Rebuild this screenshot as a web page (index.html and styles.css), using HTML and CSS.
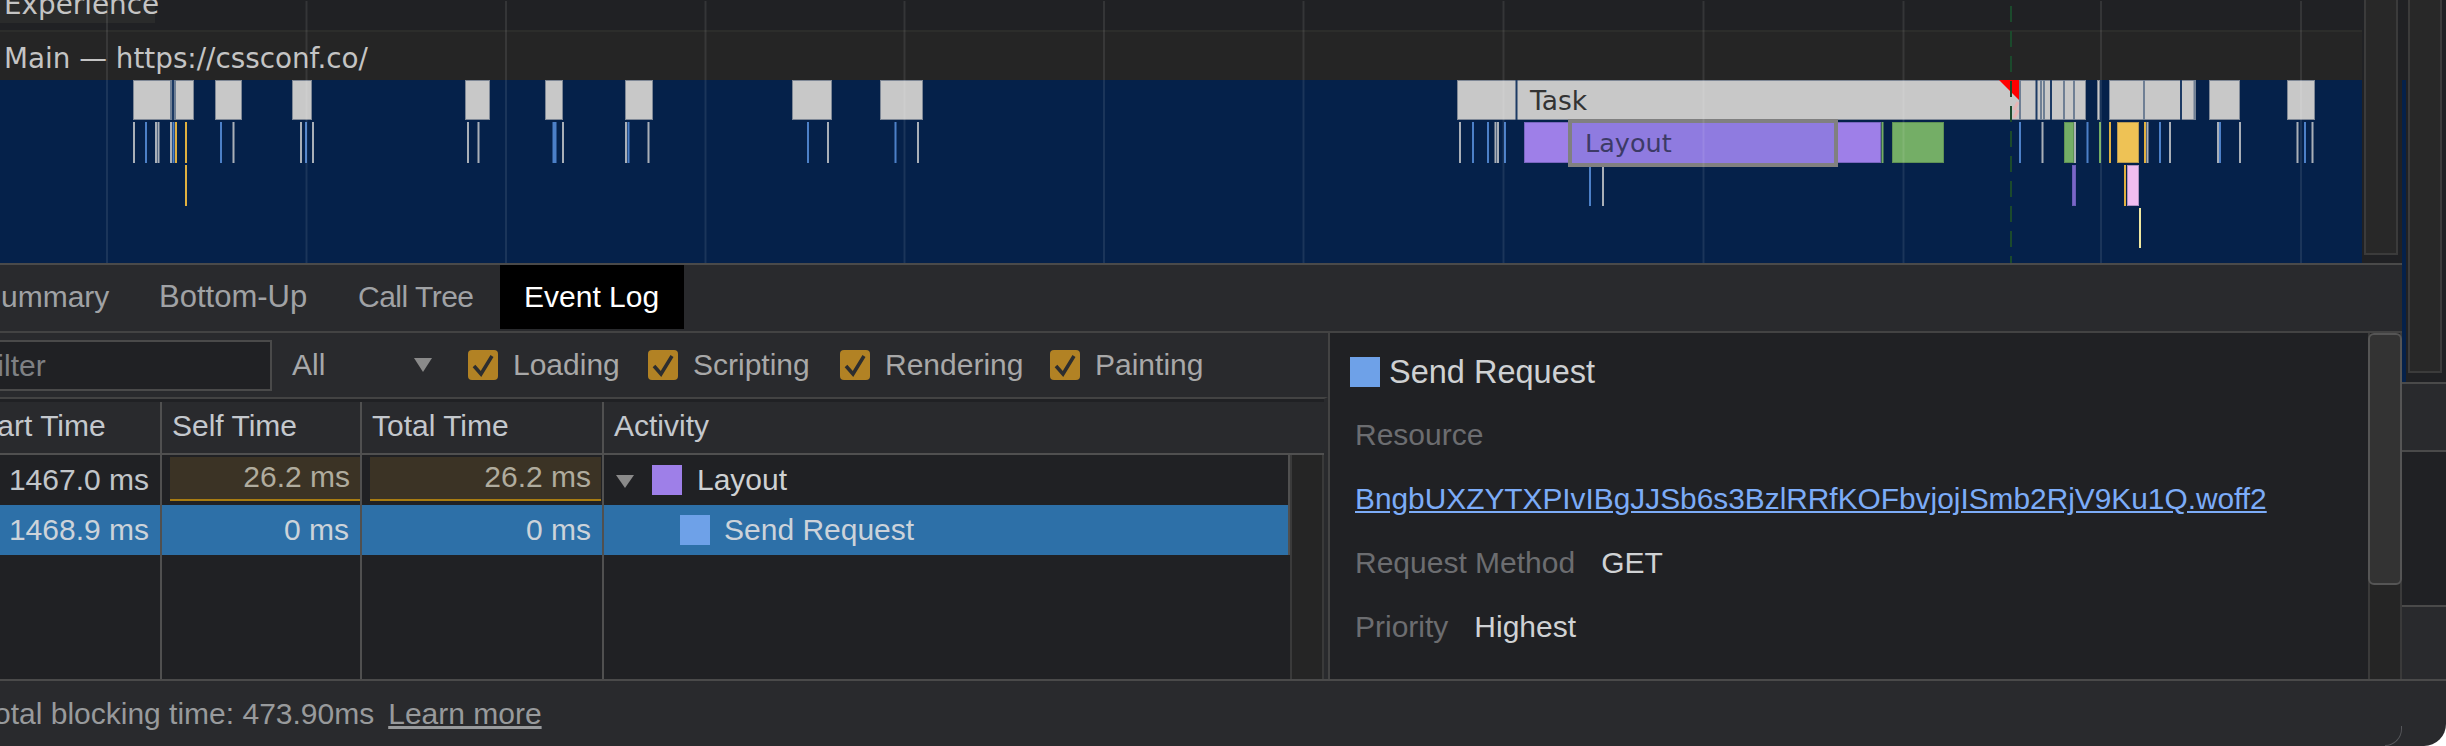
FILE: index.html
```html
<!DOCTYPE html>
<html lang="en">
<head>
<meta charset="utf-8">
<title>Performance</title>
<link rel="stylesheet" href="styles.css">
</head>
<body>
<div class="window">
  <div class="main">
    <div class="left">
      <div class="top">
        <svg class="flame" width="2362" height="263" viewBox="0 0 2362 263">
          <rect class="head-a" x="0" y="0" width="2362" height="30"/>
          <rect class="head-line" x="0" y="30" width="2362" height="2"/>
          <rect class="head-b" x="0" y="32" width="2362" height="48"/>
          <rect class="track" x="0" y="80" width="2362" height="183"/>
          <rect class="exp-bg" x="0" y="0" width="155" height="23"/>
          <text class="label" x="4" y="14">Experience</text>
          <text class="label" x="4" y="68">Main — https://cssconf.co/</text>

          <g class="bars">
            <rect x="133.5" y="80.5" width="60" height="39"/>
            <rect x="215.5" y="80.5" width="26" height="39"/>
            <rect x="292.5" y="80.5" width="19" height="39"/>
            <rect x="465.5" y="80.5" width="24" height="39"/>
            <rect x="545.5" y="80.5" width="17" height="39"/>
            <rect x="625.5" y="80.5" width="27" height="39"/>
            <rect x="792.5" y="80.5" width="39" height="39"/>
            <rect x="880.5" y="80.5" width="42" height="39"/>
            <rect x="1457.5" y="80.5" width="628" height="39"/>
            <rect x="2097.5" y="80.5" width="2" height="39"/>
            <rect x="2109.5" y="80.5" width="86" height="39"/>
            <rect x="2209.5" y="80.5" width="30" height="39"/>
            <rect x="2287.5" y="80.5" width="27" height="39"/>
          </g>
          <path class="cut-dark" d="M173 80v40M1516.500 80v40M2036.500 80v40M2051 80v40M2181 80v40"/>
          <path class="cut-mid" d="M171 80v40M175 80v40M2020 80v40M2041 80v40M2044 80v40M2064 80v40M2074 80v40M2144 80v40M2194.500 80v40"/>

          <path class="longtask" d="M1999 80H2019V100Z"/>
          <path class="hatch" d="M2018 102L2014 110M2018 110L2014 118"/>

          <path class="tick-gray" d="M134 122v41M156 122v41M158.500 122v41M171 122v41M233.500 122v41M301 122v41M313 122v41M468 122v41M478.500 122v41M563 122v41M626 122v41M648.500 122v41M828 122v41M918 122v41M1460 122v41M1495.500 122v41M1498 122v41M2042.500 122v41M2075 122v41M2147.500 122v41M2170 122v41M2218 122v41M2240 122v41M2297.500 122v41M2312.500 122v41M1603 165v41"/>
          <path class="tick-blue" d="M146 122v41M173.500 122v41M221 122v41M306 122v41M553.500 122v41M555.500 122v41M628.500 122v41M808 122v41M895.500 122v41M1473 122v41M1488 122v41M1505 122v41M2020 122v41M2087.500 122v41M2160 122v41M2220 122v41M2305 122v41M1590 165v41"/>
          <path class="tick-yellow" d="M176 122v41M186 122v41M2110 122v41M2145 122v41M186 165v41M2125 165v41"/>
          <path class="tick-green" d="M1882.500 122v41M2100 122v41"/>
          <path class="tick-pale" d="M2140 208v40"/>

          <rect class="bar-purple" x="1524.500" y="122.500" width="356" height="40"/>
          <rect class="bar-green" x="1892.500" y="122.500" width="51" height="40"/>
          <rect class="bar-green" x="2064.500" y="122.500" width="9" height="40"/>
          <rect class="bar-yellow" x="2117.500" y="122.500" width="21" height="40"/>
          <rect class="bar-violet" x="2072.500" y="165.500" width="3" height="40"/>
          <rect class="bar-pink" x="2127.500" y="165.500" width="11" height="40"/>
          <rect class="bar-selected" x="1570" y="121" width="266" height="44"/>

          <text class="task" x="1530" y="110">Task</text>
          <text class="layout" x="1585" y="152">Layout</text>

          <path class="dash" d="M2011 6V263"/>
          <path class="grid" d="M107 1V263M306.500 1V263M506 1V263M705.500 1V263M904.500 1V263M1104 1V263M1303.500 1V263M1503.500 1V263M1703.500 1V263M1903.500 1V263M2101 1V263M2301 1V263"/>
        </svg>
        <div class="overview"><div class="overview-box"></div></div>
      </div>

      <div class="lower">
        <div class="tabs">
          <div class="tab tab-summary">Summary</div>
          <div class="tab tab-wide">Bottom-Up</div>
          <div class="tab tab-tree">Call Tree</div>
          <div class="tab tab-active">Event Log</div>
        </div>
        <div class="split">
          <div class="log">
            <div class="toolbar">
              <div class="filter">Filter</div>
              <div class="select">
                <span>All</span>
                <svg class="select-arrow" width="18" height="14" viewBox="0 0 18 14"><path d="M0 0H18L9 14Z"/></svg>
              </div>
              <label class="check check-loading">
                <span class="box"><svg width="30" height="30" viewBox="0 0 30 30"><path d="M6 16L13 24L24 6"/></svg></span>Loading
              </label>
              <label class="check check-scripting">
                <span class="box"><svg width="30" height="30" viewBox="0 0 30 30"><path d="M6 16L13 24L24 6"/></svg></span>Scripting
              </label>
              <label class="check check-rendering">
                <span class="box"><svg width="30" height="30" viewBox="0 0 30 30"><path d="M6 16L13 24L24 6"/></svg></span>Rendering
              </label>
              <label class="check">
                <span class="box"><svg width="30" height="30" viewBox="0 0 30 30"><path d="M6 16L13 24L24 6"/></svg></span>Painting
              </label>
            </div>
            <div class="table">
              <div class="grid-row head">
                <div class="cell">Start Time</div>
                <div class="cell">Self Time</div>
                <div class="cell">Total Time</div>
                <div class="cell cell-last">Activity</div>
              </div>
              <div class="body">
                <div class="rows">
                  <div class="grid-row row">
                    <div class="cell num">1467.0 ms</div>
                    <div class="cell num warn warn-self"><span>26.2 ms</span></div>
                    <div class="cell num warn warn-total"><span>26.2 ms</span></div>
                    <div class="cell activity">
                      <svg class="twist" width="18" height="13" viewBox="0 0 18 13"><path d="M0 0H18L9 13Z"/></svg>
                      <span class="swatch swatch-purple"></span>Layout
                    </div>
                  </div>
                  <div class="grid-row row selected">
                    <div class="cell num">1468.9 ms</div>
                    <div class="cell num">0 ms</div>
                    <div class="cell num">0 ms</div>
                    <div class="cell activity activity-child">
                      <span class="swatch swatch-blue"></span><span class="child-name">Send Request</span>
                    </div>
                  </div>
                  <div class="grid-row filler">
                    <div class="cell"></div><div class="cell"></div><div class="cell"></div><div class="cell cell-last"></div>
                  </div>
                </div>
                <div class="log-scroll"></div>
              </div>
            </div>
          </div>
          <div class="details">
            <div class="details-body">
              <div class="d-row d-title"><span class="swatch swatch-blue d-swatch"></span><span class="d-title-text">Send Request</span></div>
              <div class="d-row d-label">Resource</div>
              <div class="d-row"><a class="d-link" href="#">BngbUXZYTXPIvIBgJJSb6s3BzlRRfKOFbvjojISmb2RjV9Ku1Q.woff2</a></div>
              <div class="d-row"><span class="d-label d-key">Request Method</span><span class="d-value">GET</span></div>
              <div class="d-row"><span class="d-label d-key">Priority</span><span class="d-value">Highest</span></div>
            </div>
            <div class="d-scroll"><div class="d-thumb"></div></div>
          </div>
        </div>
      </div>
    </div>

    <div class="side">
      <div class="side-top">
        <div class="strip"></div>
        <div class="side-box"></div>
      </div>
      <div class="side-a"></div>
      <div class="side-b"></div>
      <div class="side-c"></div>
    </div>
  </div>
  <div class="footer">
    <span class="footer-text">Total blocking time: 473.90ms</span>
    <a class="footer-link" href="#">Learn more</a>
  </div>
</div>
</body>
</html>
```
FILE: styles.css
```css
* { box-sizing: border-box; }
html, body { margin: 0; padding: 0; background: #fff; overflow: hidden; }
body { width: 2446px; height: 746px; font-family: "Liberation Sans", Arial, sans-serif; font-size: 30px; }

.window {
  width: 2446px; height: 746px; display: flex; flex-direction: column;
  background: #292a2d; border-bottom-right-radius: 22px; overflow: hidden; position: relative;
}
.main { display: flex; height: 679px; }
.left { width: 2402px; display: flex; flex-direction: column; }
.top { display: flex; height: 263px; }
.flame { display: block; flex: none; }

.head-a { fill: #202124; }
.head-line { fill: #2c2d2b; }
.head-b { fill: #252525; }
.track { fill: #05214a; }
.exp-bg { fill: #2a2b2b; }
.label { font-family: "DejaVu Sans", sans-serif; font-size: 27.800px; fill: #c4c4c4; }
.task { font-family: "DejaVu Sans", sans-serif; font-size: 26.500px; fill: #333; }
.layout { font-family: "DejaVu Sans", sans-serif; font-size: 25.500px; fill: #3c3a66; }
.bars rect { fill: #c8c8c8; stroke: #7f8896; stroke-width: 1; }
.cut-dark { stroke: #1c3a64; stroke-width: 2; fill: none; }
.cut-mid { stroke: #6f7f94; stroke-width: 2; fill: none; }
.longtask { fill: #f00; }
.hatch { stroke: #e8b5b5; stroke-width: 3; fill: none; }
.tick-gray { stroke: #a9afb7; stroke-width: 2; fill: none; }
.tick-blue { stroke: #4c80c8; stroke-width: 2; fill: none; }
.tick-yellow { stroke: #e0b040; stroke-width: 2; fill: none; }
.tick-green { stroke: #74ae62; stroke-width: 2; fill: none; }
.tick-pale { stroke: #f0e8a0; stroke-width: 2; fill: none; }
.bar-purple { fill: #9e7fe8; stroke: #7a66c0; }
.bar-green { fill: #74ae66; stroke: #5f9155; }
.bar-yellow { fill: #eec255; stroke: #b89a50; }
.bar-violet { fill: #7b66c8; stroke: #6a5cb8; }
.bar-pink { fill: #f0bdf0; stroke: #b090c0; }
.bar-selected { fill: #8f7be0; stroke: #808080; stroke-width: 4; }
.dash { stroke: #1b4a2c; stroke-width: 2; stroke-dasharray: 16 9; fill: none; }
.grid { stroke: rgba(255, 255, 255, 0.09); stroke-width: 2; fill: none; }

.overview { width: 40px; background: #202124; padding: 0 4px 0 2px; }
.overview-box { height: 255px; background: #282828; border: 2px solid #3b3b3b; border-top: 0; }

.lower { flex: 1; display: flex; flex-direction: column; border-top: 2px solid #4a4a4a; min-height: 0; }
.tabs { display: flex; height: 68px; border-bottom: 2px solid #434343; margin-left: -44px; align-items: flex-start; }
.tab { flex: none; height: 64px; line-height: 64px; padding: 0 0 0 25px; color: #a0a2a5; white-space: nowrap; }
.tab-summary { width: 178px; }
.tab-wide { width: 198px; font-size: 31px; }
.tab-tree { width: 168px; padding-left: 26px; letter-spacing: -0.5px; }
.tab-active { width: 184px; padding-left: 24px; background: #000; color: #fff; }

.split { flex: 1; display: flex; min-height: 0; }
.log { width: 1328px; flex: none; display: flex; flex-direction: column; overflow: hidden; }
.toolbar { height: 64px; flex: none; display: flex; align-items: center; margin-left: -60px; color: #a8a8a8; }
.filter {
  width: 332px; height: 51px; margin-top: 1px; background: #202124; border: 2px solid #4a4a4a; color: #7f8184;
  line-height: 48px; padding-left: 37px; margin-right: 20px;
}
.select { width: 176px; display: flex; align-items: center; justify-content: space-between; color: #a6a8aa; padding-right: 36px; }
.select-arrow path { fill: #8a8a8a; }
.check { display: flex; align-items: center; white-space: nowrap; }
.check-loading { width: 180px; }
.check-scripting { width: 192px; }
.check-rendering { width: 210px; }
.box {
  width: 30px; height: 30px; border-radius: 4px; background: #b28224; margin-right: 15px; margin-top: -1px;
  display: flex; flex: none;
}
.box path { fill: none; stroke: #2c2d2f; stroke-width: 3.500; }

.table { flex: 1; display: flex; flex-direction: column; min-height: 0; border-top: 2px solid #434343; border-right: 4px solid #292a2d; margin-left: -41px; }
.grid-row { display: grid; grid-template-columns: 203px 200px 242px 1fr; }
.cell { border-right: 2px solid #505050; padding: 0 10px; white-space: nowrap; overflow: hidden; }
.cell-last { border-right: 0; }
.head { margin-top: 3px; height: 53px; line-height: 47px; border-bottom: 2px solid #505050; color: #c4c8cd; flex: none; box-shadow: 0 -3px 0 #202124; }
.body { flex: 1; display: flex; min-height: 0; }
.rows { flex: 1; display: flex; flex-direction: column; background: #202124; }
.row { height: 50px; line-height: 50px; color: #c2c6ca; flex: none; }
.num { text-align: right; padding-right: 11px; }
.warn { padding: 2px 0 0 8px; }
.warn span {
  display: block; height: 44px; line-height: 40px; background: #3b3325; border-bottom: 2px solid #a87c12;
  color: #b0ac9e; padding-right: 10px;
}
.warn-total { padding-right: 1px; }
.activity { display: flex; align-items: center; padding-left: 12px; color: #cfd1d3; }
.twist { margin-right: 18px; margin-top: 3px; }
.twist path { fill: #8a8a8a; }
.swatch { display: inline-block; width: 30px; height: 30px; flex: none; margin-right: 15px; }
.swatch-purple { background: #9e7fe8; }
.swatch-blue { background: #6ea1e8; }
.activity-child { padding-left: 76px; }
.child-name { margin-left: -1px; }
.selected { background: #2d70a8; color: #ccd3da; }
.selected .cell { color: #ccd3da; }
.filler { flex: 1; }
.log-scroll { width: 34px; flex: none; background: #252525; border-left: 2px solid #3a3a3a; border-right: 2px solid #3a3a3a; }

.details { flex: 1; display: flex; background: #202124; border-left: 2px solid #434343; min-width: 0; }
.details-body { flex: 1; padding: 7px 0 0 25px; min-width: 0; }
.d-row { height: 64px; display: flex; align-items: center; white-space: nowrap; }
.d-title { color: #cfd1d3; margin-left: -5px; margin-bottom: -1px; }
.d-title-text { font-size: 32.500px; }
.d-swatch { margin-right: 9px; }
.d-label { color: #6c6d70; }
.d-key { margin-right: 26px; }
.d-value { color: #d0d2d4; }
.d-link { color: #7cacf8; font-size: 29.850px; }
.d-scroll { width: 34px; flex: none; background: #252525; border-left: 2px solid #3a3a3a; border-right: 2px solid #3a3a3a; display: flex; flex-direction: column; }
.d-thumb { height: 252px; margin: 0 -2px; background: #333; border: 2px solid #555; border-radius: 6px; }

.side { width: 44px; flex: none; background: #202124; display: flex; flex-direction: column; }
.side-top { height: 382px; display: flex; flex: none; }
.strip { width: 4px; margin-top: 80px; background: #05214a; }
.side-box { width: 34px; height: 373px; margin-left: 2px; background: #282828; border: 2px solid #3b3b3b; border-top: 0; }
.side-a { height: 70px; flex: none; background: #292a2d; border-top: 2px solid #4a4a4a; border-bottom: 2px solid #4a4a4a; }
.side-b { height: 153px; flex: none; background: #202124; }
.side-c { flex: 1; background: #292a2d; border-top: 2px solid #4a4a4a; }

.footer {
  flex: 1; display: flex; align-items: center; border-top: 2px solid #4a4a4a;
  color: #989a9c; white-space: nowrap; position: relative;
}
.footer::after {
  content: ""; position: absolute; right: 44px; bottom: 0; width: 16px; height: 19px;
  border-right: 1px solid #55565a; border-bottom: 1px solid #55565a; border-bottom-right-radius: 18px;
}
.footer-text { margin-left: -21px; }
.footer-link { color: #989a9c; margin-left: 14px; text-decoration: underline; }
```
